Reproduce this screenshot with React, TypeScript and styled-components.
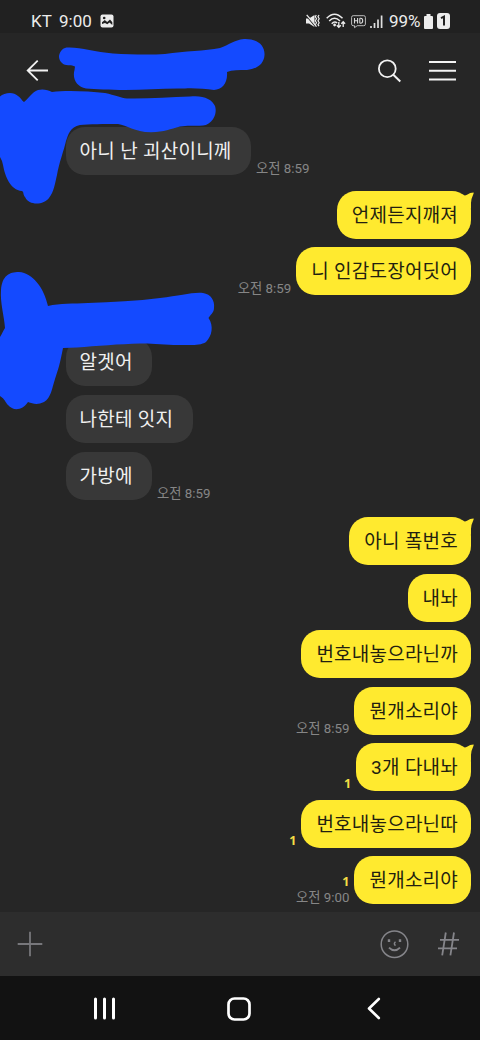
import React from 'react';
import styled, { createGlobalStyle } from 'styled-components';

const GlobalStyle = createGlobalStyle`
  * { box-sizing: border-box; }
  body { margin: 0; background: #262626; }
`;

const Screen = styled.div`
  position: relative;
  display: flex;
  flex-direction: column;
  width: 480px;
  height: 1040px;
  overflow: hidden;
  background: #262626;
  font-family: Roboto, 'Noto Sans CJK KR', sans-serif;
`;

const StatusBar = styled.div`
  display: flex;
  flex: none;
  align-items: center;
  justify-content: space-between;
  height: 33px;
  padding: 9px 30px 0 31px;
  background: #212121;
  color: #ececec;
  font-size: 17px;
  line-height: 24px;
`;

const StatusGroup = styled.div`
  display: flex;
  align-items: center;
`;

const StatusText = styled.span<{ $width: number }>`
  width: ${(p) => p.$width}px;
  white-space: pre;
`;

const Icon = styled.svg<{ $gap?: number }>`
  display: block;
  flex: none;
  margin-left: ${(p) => p.$gap ?? 0}px;
  overflow: visible;
`;

const Percent = styled.span`
  width: 34px;
  margin-left: 6px;
  white-space: pre;
`;

const Header = styled.header`
  display: flex;
  flex: none;
  align-items: center;
  height: 75px;
  padding: 0 24px 0 26px;
`;

const Spacer = styled.div`
  flex: 1;
`;

const Conversation = styled.main`
  display: flex;
  flex: 1;
  flex-direction: column;
  gap: 16px;
  padding: 18.7px 9px 0 66px;
`;

const Group = styled.section<{ $mine?: boolean; $offset?: number; $gap?: number }>`
  display: flex;
  flex-direction: column;
  align-items: ${(p) => (p.$mine ? 'flex-end' : 'flex-start')};
  gap: ${(p) => p.$gap ?? 8.5}px;
  margin-top: ${(p) => p.$offset ?? 0}px;
`;

const Row = styled.div<{ $mine?: boolean }>`
  display: flex;
  flex-direction: ${(p) => (p.$mine ? 'row-reverse' : 'row')};
  align-items: flex-end;
  gap: 5px;
  height: 48px;
`;

const Bubble = styled.div<{ $mine?: boolean }>`
  position: relative;
  height: 48px;
  padding: ${(p) => (p.$mine ? '0 13px 0 15px' : '0 19.5px 0 13.5px')};
  border-radius: 19px;
  background: ${(p) => (p.$mine ? '#ffea2f' : '#383838')};
  color: ${(p) => (p.$mine ? '#231f10' : '#f0f0f0')};
  font-size: 19px;
  letter-spacing: 0.22px;
  word-spacing: 0.3px;
  line-height: 49px;
  white-space: nowrap;
`;

const Tail = styled.svg`
  position: absolute;
  top: 0;
  right: -3px;
`;

const Meta = styled.div`
  display: flex;
  flex-direction: column;
  align-items: flex-end;
`;

const Time = styled.span`
  color: #868686;
  font-size: 13.3px;
  line-height: 13px;
  white-space: nowrap;
`;

const Unread = styled.span<{ $stacked?: boolean }>`
  margin-bottom: ${(p) => (p.$stacked ? 2 : 0)}px;
  color: #f3df45;
  font-family: 'Noto Sans', sans-serif;
  font-size: 12.5px;
  font-weight: 700;
  line-height: 15px;
`;

const InputBar = styled.footer`
  display: flex;
  flex: none;
  align-items: center;
  height: 64px;
  padding: 0 21px 0 17px;
  background: #2d2d2d;
`;

const NavBar = styled.nav`
  display: flex;
  flex: none;
  align-items: center;
  height: 64px;
  padding: 1px 0 0 93px;
  background: #121212;
`;

const Marker = styled.svg`
  position: absolute;
  top: 0;
  left: 0;
  pointer-events: none;
`;

type Message = { text: string; time?: string; unread?: boolean };
type Thread = { mine?: boolean; tail?: boolean; offset?: number; gap?: number; messages: Message[] };

const threads: Thread[] = [
  { messages: [{ text: '아니 난 괴산이니께', time: '오전 8:59' }] },
  { mine: true, tail: true, messages: [{ text: '언제든지깨져' }, { text: '니 인감도장어딧어', time: '오전 8:59' }] },
  { offset: 27, gap: 9, messages: [{ text: '알겟어' }, { text: '나한테 잇지' }, { text: '가방에', time: '오전 8:59' }] },
  {
    mine: true,
    tail: true,
    offset: 1,
    messages: [{ text: '아니 퐄번호' }, { text: '내놔' }, { text: '번호내놓으라닌까' }, { text: '뭔개소리야', time: '오전 8:59' }],
  },
  {
    mine: true,
    tail: true,
    offset: -7.5,
    messages: [
      { text: '3개 다내놔', unread: true },
      { text: '번호내놓으라닌따', unread: true },
      { text: '뭔개소리야', unread: true, time: '오전 9:00' },
    ],
  },
];

const StatusIcons = () => (
  <>
    <Icon width="14" height="14" viewBox="0 0 14 14">
      <path d="M0 4.5h3L8.5 1v12L3 9.5H0z" fill="#ececec" />
      <path d="M0 1l10 12" stroke="#212121" strokeWidth="1.6" />
      <path d="M.7.8l9.8 11.8" stroke="#ececec" strokeWidth="1.3" />
      <path d="M10.3 1l-1 1.7 1.2 2-1.2 2 1.2 2-1.2 2M13 1l-1 1.7 1.2 2-1.2 2 1.2 2-1.2 2 1 1.4" fill="none" stroke="#ececec" strokeWidth="1.2" />
    </Icon>
    <Icon $gap={6} width="20" height="16" viewBox="0 0 20 16">
      <g fill="none" stroke="#ececec" strokeWidth="1.5">
        <path d="M.7 5.3Q8.5-2.7 16.5 5.3" />
        <path d="M3.2 8Q8.5 2.6 14 8" />
        <path d="M5.7 10.7Q8.5 7.7 11.2 10" />
      </g>
      <circle cx="8.6" cy="12" r="1.4" fill="#ececec" />
      <path d="M12.8 9v5M10.8 12.2l2 2.2 2-2.2M17.2 14V9M15.3 10.8l1.9-2 1.9 2" fill="none" stroke="#ececec" strokeWidth="1.3" />
    </Icon>
    <Icon $gap={5} width="15" height="14" viewBox="0 0 15 14">
      <path d="M2.2 1.7h10.6q1.6 0 1.6 1.6v6.8q0 1.6-1.6 1.6H6.2L3.5 13.7v-2H2.2Q.6 11.7.6 10.1V3.3Q.6 1.7 2.2 1.7z" fill="none" stroke="#bcbcbc" />
      <path d="M3.5 4v5.5M6.6 4v5.5M3.5 6.7h3.1M8.8 4.2v5M8.8 4.2h.8c2.8 0 2.8 5 0 5h-.8" fill="none" stroke="#dcdcdc" strokeWidth="1.1" />
    </Icon>
    <Icon $gap={4} width="13" height="13" viewBox="0 0 13 13">
      <path d="M1 11v2M4.5 8v5M8 4.5v8.5M11.6 .5v12.5" stroke="#dedede" strokeWidth="1.7" />
    </Icon>
  </>
);

const MarkerStrokes = () => (
  <Marker width="480" height="420" viewBox="0 0 480 420" fill="#144aff">
    <path d="M68 47.5C80 47 95 52 113 53.5C130 54.5 150 55 165 54C185 51 205 51 220 48C229 45 234 40 244 39C257 38.5 265 45 264.5 55C264 64 257 69 247 70C239 70 232 70 227 72C228 83 222 90 214 90C205 89 195 88 185 88.5C165 88 145 90 125 90C110 90 95 89 86 88.5C77 87 72 79 74.5 70L75 66.5C71 64 68 66 64 64.5C60 62 59 59 59 56C60 50 64 47.5 68 47.5Z" />
    <path d="M0 96.5C4 93 13 91 18 96C22 99 22 101 24 102C28 99 32 92 38 90C43 88.5 48 90 52 92C65 90 88 91 105 93C115 95 121 98 127 98.5C147 99 170 97 190 96.5C203 95 212 99 215 106C218 115 211 125 203 125.5C193 126 187 125 180 126.5C170 129 165 132 151 132.3C134 132 127 125 118 124C105 124 88 124 80 125C70 127 68 135 66 141C64 150 59 163 57 175C55 183 54 192 49 198C44 205 29 206 25 197C23 195 24 192 22 191C10 190 5 176 3 165Q2 160 0 157Z" />
    <path d="M1 290C2 276 9 272 19 272C33 273 44 288 48 306C60 303 73 304 88 303C112 302 137 301 160 298C180 296 192 292 203 293C211 294 215 301 214 308C214 313 210 315 208.5 318C214 326 212 336 206 342C200 346 190 345 178 345C165 345 150 343 140 343.5C120 344 96 346 77 347.5L63 348C60 364 58 370 55 379C52 388 51 398 44 402C38 405 33 404 28 402C22 411 13 411 8 405C5 402 5 399 0 396V337C2 334 3 331 5 328C4 315 0 303 1 290Z" />
  </Marker>
);

export default function App() {
  return (
    <Screen>
      <GlobalStyle />
      <StatusBar>
        <StatusGroup>
          <StatusText $width={28}>KT</StatusText>
          <StatusText $width={41}>9:00</StatusText>
          <Icon width="14" height="14" viewBox="0 0 14 14">
            <rect x=".5" y=".5" width="13" height="13" rx="2" fill="#ececec" />
            <path d="M2 10V8.2L4.8 6l2.4 2L10 5.5l2.3 2.7V11L9.5 8.5 7.3 10.3 5 9z" fill="#212121" />
            <circle cx="4.2" cy="4" r="1.3" fill="#212121" />
          </Icon>
        </StatusGroup>
        <StatusGroup>
          <StatusIcons />
          <Percent>99%</Percent>
          <Icon $gap={1} width="9" height="15" viewBox="0 0 9 15">
            <path d="M2.5 0h4v2H8q1 0 1 1v11q0 1-1 1H1q-1 0-1-1V3q0-1 1-1h1.5z" fill="#ececec" />
          </Icon>
          <Icon $gap={4} width="13" height="16" viewBox="0 0 13 16">
            <rect width="13" height="16" rx="3" fill="#ececec" />
            <path d="M4 5.2l3-1.5V12.5" fill="none" stroke="#212121" strokeWidth="2" />
          </Icon>
        </StatusGroup>
      </StatusBar>
      <Header>
        <Icon width="23" height="22" viewBox="0 0 23 22">
          <path d="M22 10.5H2M11.7.7L1.7 10.5l10 9.8" fill="none" stroke="#f2f2f2" strokeWidth="1.8" />
        </Icon>
        <Spacer />
        <Icon width="24" height="24" viewBox="0 0 24 24">
          <circle cx="10.3" cy="9.7" r="8.4" fill="none" stroke="#f2f2f2" strokeWidth="1.8" />
          <path d="M16.3 15.7l7 6.8" stroke="#f2f2f2" strokeWidth="2" />
        </Icon>
        <Icon $gap={28} width="27" height="20" viewBox="0 0 27 20">
          <path d="M0 1h27M0 9.8h27M0 18.4h27" stroke="#f2f2f2" strokeWidth="2" />
        </Icon>
      </Header>
      <Conversation>
        {threads.map((thread, t) => (
          <Group key={t} $mine={thread.mine} $offset={thread.offset} $gap={thread.gap}>
            {thread.messages.map((message, i) => (
              <Row key={i} $mine={thread.mine}>
                <Bubble $mine={thread.mine}>
                  {message.text}
                  {thread.tail && i === 0 && (
                    <Tail width="18" height="20" viewBox="0 0 18 20">
                      <path d="M6 3.5Q8.5 5.2 11 3.8Q14.2 1.6 17.5 1.6Q18 2 17.4 3Q15.2 7.5 15 12V18L5 9Z" fill="#ffea2f" />
                    </Tail>
                  )}
                </Bubble>
                <Meta>
                  {message.unread && <Unread $stacked={Boolean(message.time)}>1</Unread>}
                  {message.time && <Time>{message.time}</Time>}
                </Meta>
              </Row>
            ))}
          </Group>
        ))}
      </Conversation>
      <InputBar>
        <Icon width="26" height="26" viewBox="0 0 26 26">
          <path d="M.7 13h24.6M13 .7v24.6" stroke="#77777b" strokeWidth="1.8" />
        </Icon>
        <Spacer />
        <Icon width="29" height="29" viewBox="0 0 29 29" fill="none" stroke="#85858a" strokeWidth="1.5">
          <circle cx="14.5" cy="14.2" r="13.3" />
          <path d="M9 17.6q5.5 5.5 11 0" strokeWidth="1.9" />
          <path d="M15.5 11.8q-2.3 2 0 3.8" />
          <path d="M9 9.3v2.8M20 9.3v2.8" strokeWidth="2.4" />
        </Icon>
        <Icon $gap={29} width="21" height="24" viewBox="0 0 21 24">
          <path d="M7.8.5L4.2 23.3M16 .5l-3.6 22.8M2 7.8h19M0 16.4h19" fill="none" stroke="#85858a" strokeWidth="1.8" />
        </Icon>
      </InputBar>
      <NavBar>
        <Icon width="23" height="23" viewBox="0 0 23 23">
          <path d="M2.5 2v19M11.5 2v19M20.5 2v19" stroke="#fff" strokeWidth="3" strokeLinecap="round" />
        </Icon>
        <Icon $gap={111} width="24" height="24" viewBox="0 0 24 24">
          <rect x="1.5" y="1.5" width="21" height="21" rx="6" fill="none" stroke="#fff" strokeWidth="2.7" />
        </Icon>
        <Icon $gap={115} width="15" height="23" viewBox="0 0 15 23">
          <path d="M12.8 2L3 11.5l9.8 9.5" fill="none" stroke="#fff" strokeWidth="2.6" strokeLinecap="round" strokeLinejoin="round" />
        </Icon>
      </NavBar>
      <MarkerStrokes />
    </Screen>
  );
}
